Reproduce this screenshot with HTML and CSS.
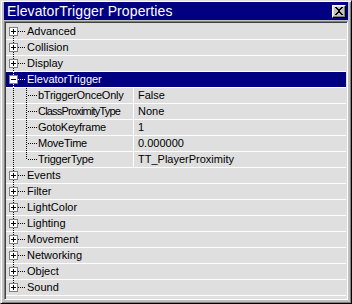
FILE: index.html
```html
<!DOCTYPE html>
<html>
<head>
<meta charset="utf-8">
<link rel="stylesheet" href="styles.css">
</head>
<body>
<div class="window">
  <div class="titlebar">
    <span class="title">ElevatorTrigger Properties</span>
    <span class="close"><svg width="10" height="8" viewBox="0 0 10 8"><path d="M1 0h2v1h1v1h2v-1h1v-1h2v1h-1v1h-1v1h-1v2h1v1h1v1h1v1h-2v-1h-1v-1h-2v1h-1v1h-2v-1h1v-1h1v-1h1v-2h-1v-1h-1v-1h-1z" fill="#000"/></svg></span>
  </div>
  <div class="list">
    <div class="row"><svg class="tree" width="21" height="15"><line class="v" x1="7.5" y1="8" x2="7.5" y2="15"/><line class="h" x1="12" y1="7.5" x2="19" y2="7.5"/><rect class="box" x="3.5" y="3.5" width="8" height="8"/><path class="sign" d="M5 7.5h5M7.5 5v5"/></svg><span class="name">Advanced</span></div>
    <div class="row"><svg class="tree" width="21" height="15"><line class="v" x1="7.5" y1="0" x2="7.5" y2="15"/><line class="h" x1="12" y1="7.5" x2="19" y2="7.5"/><rect class="box" x="3.5" y="3.5" width="8" height="8"/><path class="sign" d="M5 7.5h5M7.5 5v5"/></svg><span class="name">Collision</span></div>
    <div class="row"><svg class="tree" width="21" height="15"><line class="v" x1="7.5" y1="0" x2="7.5" y2="15"/><line class="h" x1="12" y1="7.5" x2="19" y2="7.5"/><rect class="box" x="3.5" y="3.5" width="8" height="8"/><path class="sign" d="M5 7.5h5M7.5 5v5"/></svg><span class="name">Display</span></div>
    <div class="row sel"><svg class="tree" width="21" height="15"><line class="v" x1="7.5" y1="0" x2="7.5" y2="15"/><line class="h" x1="12" y1="7.5" x2="19" y2="7.5"/><rect class="box" x="3.5" y="3.5" width="8" height="8"/><path class="sign" d="M5 7.5h5"/></svg><span class="name">ElevatorTrigger</span></div>
    <div class="row prop"><div class="key"><svg class="tree" width="32" height="15"><line class="v" x1="7.5" y1="0" x2="7.5" y2="15"/><line class="v" x1="20.5" y1="0" x2="20.5" y2="15"/><line class="h" x1="22" y1="7.5" x2="31" y2="7.5"/></svg><span class="name">bTriggerOnceOnly</span></div><span class="val">False</span></div>
    <div class="row prop"><div class="key"><svg class="tree" width="32" height="15"><line class="v" x1="7.5" y1="0" x2="7.5" y2="15"/><line class="v" x1="20.5" y1="0" x2="20.5" y2="15"/><line class="h" x1="22" y1="7.5" x2="31" y2="7.5"/></svg><span class="name tight">ClassProximityType</span></div><span class="val">None</span></div>
    <div class="row prop"><div class="key"><svg class="tree" width="32" height="15"><line class="v" x1="7.5" y1="0" x2="7.5" y2="15"/><line class="v" x1="20.5" y1="0" x2="20.5" y2="15"/><line class="h" x1="22" y1="7.5" x2="31" y2="7.5"/></svg><span class="name">GotoKeyframe</span></div><span class="val">1</span></div>
    <div class="row prop"><div class="key"><svg class="tree" width="32" height="15"><line class="v" x1="7.5" y1="0" x2="7.5" y2="15"/><line class="v" x1="20.5" y1="0" x2="20.5" y2="15"/><line class="h" x1="22" y1="7.5" x2="31" y2="7.5"/></svg><span class="name">MoveTime</span></div><span class="val">0.000000</span></div>
    <div class="row prop"><div class="key"><svg class="tree" width="32" height="15"><line class="v" x1="7.5" y1="0" x2="7.5" y2="15"/><line class="v" x1="20.5" y1="0" x2="20.5" y2="8"/><line class="h" x1="22" y1="7.5" x2="31" y2="7.5"/></svg><span class="name">TriggerType</span></div><span class="val">TT_PlayerProximity</span></div>
    <div class="row"><svg class="tree" width="21" height="15"><line class="v" x1="7.5" y1="0" x2="7.5" y2="15"/><line class="h" x1="12" y1="7.5" x2="19" y2="7.5"/><rect class="box" x="3.5" y="3.5" width="8" height="8"/><path class="sign" d="M5 7.5h5M7.5 5v5"/></svg><span class="name">Events</span></div>
    <div class="row"><svg class="tree" width="21" height="15"><line class="v" x1="7.5" y1="0" x2="7.5" y2="15"/><line class="h" x1="12" y1="7.5" x2="19" y2="7.5"/><rect class="box" x="3.5" y="3.5" width="8" height="8"/><path class="sign" d="M5 7.5h5M7.5 5v5"/></svg><span class="name">Filter</span></div>
    <div class="row"><svg class="tree" width="21" height="15"><line class="v" x1="7.5" y1="0" x2="7.5" y2="15"/><line class="h" x1="12" y1="7.5" x2="19" y2="7.5"/><rect class="box" x="3.5" y="3.5" width="8" height="8"/><path class="sign" d="M5 7.5h5M7.5 5v5"/></svg><span class="name">LightColor</span></div>
    <div class="row"><svg class="tree" width="21" height="15"><line class="v" x1="7.5" y1="0" x2="7.5" y2="15"/><line class="h" x1="12" y1="7.5" x2="19" y2="7.5"/><rect class="box" x="3.5" y="3.5" width="8" height="8"/><path class="sign" d="M5 7.5h5M7.5 5v5"/></svg><span class="name">Lighting</span></div>
    <div class="row"><svg class="tree" width="21" height="15"><line class="v" x1="7.5" y1="0" x2="7.5" y2="15"/><line class="h" x1="12" y1="7.5" x2="19" y2="7.5"/><rect class="box" x="3.5" y="3.5" width="8" height="8"/><path class="sign" d="M5 7.5h5M7.5 5v5"/></svg><span class="name">Movement</span></div>
    <div class="row"><svg class="tree" width="21" height="15"><line class="v" x1="7.5" y1="0" x2="7.5" y2="15"/><line class="h" x1="12" y1="7.5" x2="19" y2="7.5"/><rect class="box" x="3.5" y="3.5" width="8" height="8"/><path class="sign" d="M5 7.5h5M7.5 5v5"/></svg><span class="name">Networking</span></div>
    <div class="row"><svg class="tree" width="21" height="15"><line class="v" x1="7.5" y1="0" x2="7.5" y2="15"/><line class="h" x1="12" y1="7.5" x2="19" y2="7.5"/><rect class="box" x="3.5" y="3.5" width="8" height="8"/><path class="sign" d="M5 7.5h5M7.5 5v5"/></svg><span class="name">Object</span></div>
    <div class="row"><svg class="tree" width="21" height="15"><line class="v" x1="7.5" y1="0" x2="7.5" y2="8"/><line class="h" x1="12" y1="7.5" x2="19" y2="7.5"/><rect class="box" x="3.5" y="3.5" width="8" height="8"/><path class="sign" d="M5 7.5h5M7.5 5v5"/></svg><span class="name">Sound</span></div>
  </div>
</div>
</body>
</html>
```
FILE: styles.css
```css
html, body {
  margin: 0;
  padding: 0;
  background: #c0c0c0;
}
.window {
  box-sizing: border-box;
  width: 352px;
  height: 304px;
  background: #c0c0c0;
  border: 1px solid;
  border-color: #dfdfdf #000 #000 #dfdfdf;
  box-shadow: inset 1px 1px #fff, inset -1px -1px #808080;
  padding: 1px 3px 3px 3px;
  display: flex;
  flex-direction: column;
  font-family: "Liberation Sans", Arial, sans-serif;
}
.titlebar {
  height: 18px;
  flex: none;
  background: #000080;
  color: #fff;
  display: flex;
  align-items: center;
  justify-content: space-between;
  padding: 0 2px 0 3px;
  margin-bottom: 1px;
}
.title {
  font-size: 14px;
  line-height: 18px;
  letter-spacing: 0.1px;
  white-space: nowrap;
}
.close {
  box-sizing: border-box;
  width: 14px;
  height: 13px;
  background: #c0c0c0;
  border: 1px solid;
  border-color: #fff #000 #000 #fff;
  box-shadow: inset -1px -1px #808080, inset 1px 1px #dfdfdf;
  display: flex;
  align-items: center;
  justify-content: center;
}
.close svg { display: block; }
.list {
  flex: 1;
  background: #dfdfdf;
  border: 1px solid;
  border-color: #808080 #fff #fff #808080;
  box-shadow: inset 1px 1px #404040;
  padding: 2px 1px 0 1px;
  overflow: hidden;
}
.row {
  height: 15px;
  border-bottom: 1px solid #fff;
  display: flex;
  align-items: center;
  font-size: 11px;
  line-height: 15px;
  color: #000;
  white-space: nowrap;
}
.row.sel {
  background: #000080;
  color: #fff;
}
.tree {
  display: block;
  flex: none;
  shape-rendering: crispEdges;
}
.tree .v, .tree .h {
  stroke: #000;
  stroke-width: 1;
  stroke-dasharray: 1 1;
}
.row.sel .tree .v, .row.sel .tree .h {
  stroke: #fff;
}
.tree .box {
  fill: #fff;
  stroke: #808080;
  stroke-width: 1;
}
.tree .sign {
  stroke: #000;
  stroke-width: 1;
  fill: none;
}
.key {
  width: 127px;
  flex: none;
  display: flex;
  align-items: center;
}
.prop .name {
  letter-spacing: -0.25px;
}
.prop .name.tight {
  letter-spacing: -0.8px;
}
.val {
  border-left: 1px solid #fff;
  padding-left: 4px;
  height: 15px;
}
```
